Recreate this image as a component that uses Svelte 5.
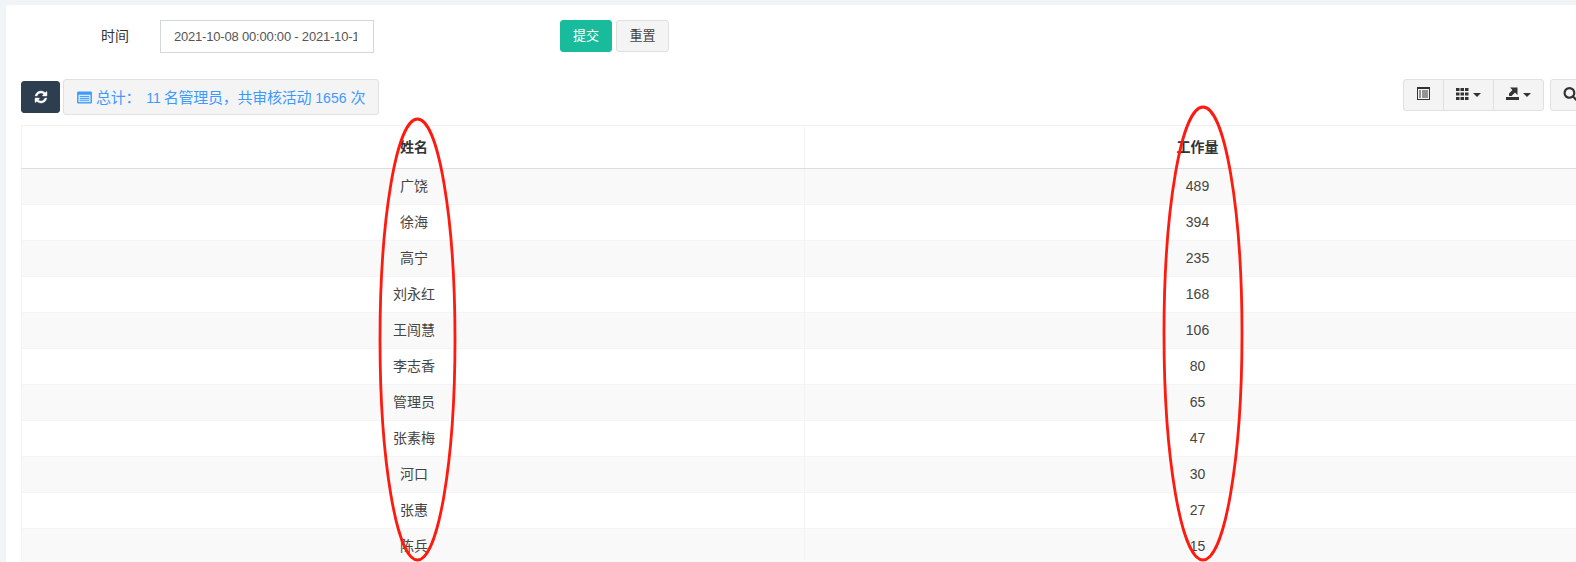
<script>
  const rows = [
    ['广饶', 489], ['徐海', 394], ['高宁', 235], ['刘永红', 168], ['王闯慧', 106], ['李志香', 80],
    ['管理员', 65], ['张素梅', 47], ['河口', 30], ['张惠', 27], ['陈兵', 15]
  ];
  const refresh = 'M1639 1056q0 5-1 7-64 268-268 434.5t-478 166.5q-146 0-282.5-55t-243.5-157l-129 129q-19 19-45 19t-45-19-19-45v-448q0-26 19-45t45-19h448q26 0 45 19t19 45-19 45l-137 137q71 66 161 102t187 36q134 0 250-65t186-179q11-17 53-117 8-23 30-23h192q13 0 22.5 9.5t9.5 22.5zm25-800v448q0 26-19 45t-45 19h-448q-26 0-45-19t-19-45 19-45l138-138q-148-137-349-137-134 0-250 65t-186 179q-11 17-53 117-8 23-30 23h-199q-13 0-22.5-9.5t-9.5-22.5v-7q65-268 270-434.5t480-166.5q146 0 284 55.5t245 156.5l130-129q19-19 45-19t45 19 19 45z';
  const search = 'M1216 832q0-185-131.500-316.500t-316.500-131.500-316.500 131.500-131.500 316.500 131.500 316.500 316.500 131.500 316.500-131.500 131.500-316.500zm512 832q0 52-38 90t-90 38q-54 0-90-38l-343-342q-179 124-399 124-143 0-273.500-55.500t-225-150-150-225-55.500-273.500 55.500-273.500 150-225 225-150 273.500-55.500 273.500 55.500 225 150 150 225 55.500 273.500q0 220-124 399l343 343q37 37 37 90z';
</script>

<div class="page">
  <div class="card">
    <form class="filter">
      <label class="label" for="range">时间</label>
      <input id="range" class="range" value="2021-10-08 00:00:00 - 2021-10-15 23:59:59" />
      <div class="actions">
        <button type="button" class="btn submit">提交</button>
        <button type="button" class="btn reset">重置</button>
      </div>
    </form>

    <div class="toolbar">
      <div class="left">
        <button type="button" class="btn dark" aria-label="刷新">
          <svg viewBox="0 0 1792 1792" width="14" height="14"><path d={refresh} fill="#fff" stroke="#fff" stroke-width="50" /></svg>
        </button>
        <div class="btn total">
          <svg viewBox="0 0 16 14" width="15" height="13" class="listicon">
            <rect x="0" y="0.5" width="16" height="13" rx="1.5" fill="#3c9aff" />
            <rect x="1.5" y="4" width="13" height="8" fill="#d5e8ff" />
            <rect x="3" y="5.5" width="10" height="1" fill="#3c9aff" />
            <rect x="3" y="7.5" width="10" height="1" fill="#3c9aff" />
            <rect x="3" y="9.5" width="10" height="1" fill="#3c9aff" />
          </svg>
          <span class="sum">总计：<b class="n1">11</b>名管理员，共审核活动<b class="n2">1656</b>次</span>
        </div>
      </div>
      <div class="right">
        <div class="group">
          <button type="button" class="btn seg first" aria-label="切换">
            <svg viewBox="0 0 13 13" width="13" height="13">
              <rect x="0.5" y="0.5" width="12" height="12" fill="none" stroke="#333" />
              <rect x="0" y="0" width="13" height="2" fill="#333" />
              <rect x="2" y="3.500" width="2" height="1" fill="#333" />
              <rect x="5" y="3.500" width="6" height="1" fill="#333" />
              <rect x="2" y="5.500" width="2" height="1" fill="#333" />
              <rect x="5" y="5.500" width="6" height="1" fill="#333" />
              <rect x="2" y="7.500" width="2" height="1" fill="#333" />
              <rect x="5" y="7.500" width="6" height="1" fill="#333" />
              <rect x="2" y="9.500" width="2" height="1" fill="#333" />
              <rect x="5" y="9.500" width="6" height="1" fill="#333" />
            </svg>
          </button>
          <button type="button" class="btn seg cols" aria-label="列">
            <svg viewBox="0 0 13 12" width="13" height="12">
              {#each [0, 4.5, 9] as x}
                {#each [0, 4.5, 9] as y}
                  <rect {x} {y} width="3.5" height="3" fill="#333" />
                {/each}
              {/each}
            </svg>
            <i class="caret"></i>
          </button>
          <button type="button" class="btn seg last" aria-label="导出">
            <svg viewBox="0 0 13 13" width="13" height="13">
              <rect x="0" y="10" width="13" height="3" fill="#333" />
              <path d="M4 0.500 H11.500 V8 L9 5.500 L5.500 9 H3.500 L3 8.500 V6.500 L6.500 3z" fill="#333" />
            </svg>
            <i class="caret"></i>
          </button>
        </div>
        <button type="button" class="btn searchbtn" aria-label="搜索">
          <svg viewBox="0 0 1792 1792" width="15" height="15"><path d={search} fill="#333" /></svg>
        </button>
      </div>
    </div>

    <table class="tbl">
      <thead>
        <tr><th class="c1"><span class="up">姓名</span></th><th><span class="up">工作量</span></th></tr>
      </thead>
      <tbody>
        {#each rows as [name, n]}
          <tr><td><span class="up">{name}</span></td><td>{n}</td></tr>
        {/each}
      </tbody>
    </table>
  </div>

  <svg class="marks" width="1576" height="562" viewBox="0 0 1576 562">
    <ellipse cx="417.500" cy="339.500" rx="37.500" ry="220.500" />
    <ellipse cx="1203" cy="333.500" rx="39" ry="226.500" />
  </svg>
</div>

<style>
  :global(html), :global(body) { margin: 0; overflow: hidden; }
  :global(body) { background: #f1f4f6; }
  .page {
    position: relative;
    width: 1576px;
    height: 562px;
    overflow: hidden;
    font-family: "Liberation Sans", "Noto Sans CJK SC", sans-serif;
    font-size: 14px;
    color: #333;
  }
  .card {
    margin: 5px 0 0 6px;
    width: 1620px;
    height: 620px;
    padding: 15px 0 0 15px;
    box-sizing: border-box;
    background: #fff;
    border-radius: 3px;
  }
  .filter {
    display: flex;
    align-items: flex-start;
    height: 59px;
  }
  .label {
    width: 139px;
    padding-right: 31px;
    box-sizing: border-box;
    line-height: 33px;
    text-align: right;
    flex: none;
    color: #333;
  }
  .range {
    width: 214px;
    height: 33px;
    box-sizing: border-box;
    padding: 0 16px 0 13px;
    border: 1px solid #d2d6de;
    font: inherit;
    font-size: 13px;
    letter-spacing: -0.2px;
    color: #555;
    outline: none;
    overflow: hidden;
  }
  .actions { display: flex; gap: 4px; margin-left: 186px; }
  .btn {
    box-sizing: border-box;
    height: 32px;
    border: 1px solid #e0e0e0;
    border-radius: 3px;
    background: #f4f4f4;
    color: #444;
    font: inherit;
    font-size: 13px;
    padding: 0;
    display: inline-flex;
    align-items: center;
    justify-content: center;
    white-space: nowrap;
  }
  .submit, .reset { padding-bottom: 3px; }
  .submit { background: #18bc9c; border-color: #18bc9c; color: #fff; width: 52px; }
  .reset { width: 53px; }
  .toolbar {
    display: flex;
    justify-content: space-between;
    align-items: flex-start;
    width: 1568px;
    height: 46px;
  }
  .left { display: flex; align-items: center; gap: 3px; }
  .dark { width: 39px; height: 32px; background: #2c3e50; border-color: #2c3e50; }
  .total { height: 36px; color: #3c9aff; font-size: 15px; width: 316px; padding: 0 13px 2px; gap: 4px; justify-content: flex-start; }
  .sum { letter-spacing: -0.25px; }
  .total b { font-weight: 400; font-size: 14px; letter-spacing: 0; }
  .n1 { margin: 0 3px 0 6px; }
  .n2 { margin: 0 4px; }
  .listicon { flex: none; margin-top: 2px; }
  .right { display: flex; gap: 6px; }
  .group { display: flex; }
  .seg { border-radius: 0; margin-left: -1px; gap: 4px; padding-bottom: 3px; }
  .first { width: 41px; margin-left: 0; border-radius: 3px 0 0 3px; }
  .cols { width: 51px; }
  .last { width: 51px; border-radius: 0 3px 3px 0; }
  .searchbtn { width: 39px; padding: 0 0 3px 12px; justify-content: flex-start; }
  .caret {
    width: 0; height: 0;
    border-left: 4px solid transparent;
    border-right: 4px solid transparent;
    border-top: 4px solid #333;
    margin-top: 2px;
  }
  .tbl {
    width: 1568px;
    border-collapse: collapse;
    table-layout: fixed;
    border: 1px solid #f0f0f0;
    border-bottom: 0;
  }
  .c1 { width: 783px; }
  th, td {
    text-align: center;
    vertical-align: middle;
    box-sizing: border-box;
    padding: 0 0 0 2px;
    border-left: 1px solid #f4f4f4;
  }
  th {
    height: 43px;
    font-weight: 700;
    color: #333;
    border-bottom: 1px solid #ddd;
  }
  td { height: 36px; padding-bottom: 2px; border-top: 1px solid #f4f4f4; color: #444; }
  .up { display: block; margin-top: -2px; }
  tbody tr:nth-child(odd) td { background: #f9f9f9; }
  .marks { position: absolute; left: 0; top: 0; pointer-events: none; }
  .marks ellipse { fill: none; stroke: #ff1a10; stroke-width: 2.800; }
</style>
